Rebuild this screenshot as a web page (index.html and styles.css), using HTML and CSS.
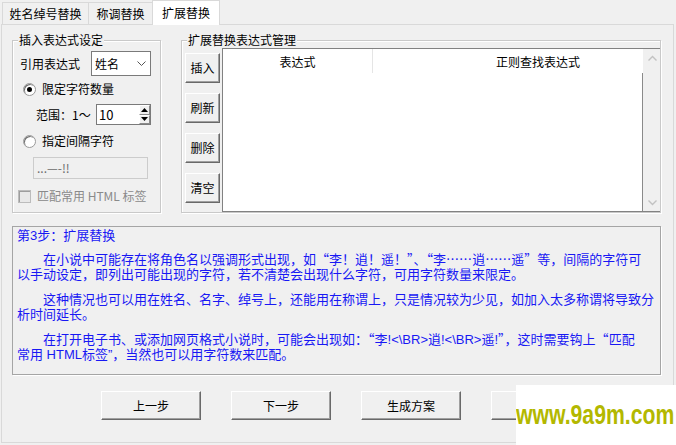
FILE: index.html
```html
<!DOCTYPE html>
<html lang="zh-CN">
<head>
<meta charset="utf-8">
<title>扩展替换</title>
<link rel="stylesheet" href="styles.css">
</head>
<body>
<div class="tabs">
  <div class="tab t1">姓名绰号替换</div>
  <div class="tab t2">称调替换</div>
  <div class="tab t3 active">扩展替换</div>
</div>
<div class="panel">
  <div class="top">
    <div class="group g1">
      <span class="gtitle">插入表达式设定</span>
      <div class="row r1">
        <span class="lbl">引用表达式</span>
        <div class="select"><span>姓名</span>
          <svg class="chev" width="9" height="6" viewBox="0 0 9 6"><path d="M0.5 0.5 L4.5 4.5 L8.5 0.5" fill="none" stroke="#555" stroke-width="1"/></svg>
        </div>
      </div>
      <div class="row r2"><span class="radio checked"></span><span class="rlbl">限定字符数量</span></div>
      <div class="row r3">
        <span class="rng">范围：1～</span>
        <div class="spin"><span class="spinval">10</span>
          <div class="spinbtns">
            <div class="sb"><svg width="7" height="4" viewBox="0 0 7 4"><path d="M0 4 L3.5 0 L7 4 Z" fill="#000"/></svg></div>
            <div class="sb"><svg width="7" height="4" viewBox="0 0 7 4"><path d="M0 0 L3.5 4 L7 0 Z" fill="#000"/></svg></div>
          </div>
        </div>
      </div>
      <div class="row r4"><span class="radio"></span><span class="rlbl">指定间隔字符</span></div>
      <div class="row r5"><div class="textbox">...—-!!</div></div>
      <div class="row r6"><span class="check"></span><span class="clbl">匹配常用 HTML 标签</span></div>
    </div>
    <div class="group g2">
      <span class="gtitle">扩展替换表达式管理</span>
      <div class="btncol">
        <div class="btn sbtn">插入</div>
        <div class="btn sbtn">刷新</div>
        <div class="btn sbtn">删除</div>
        <div class="btn sbtn">清空</div>
      </div>
      <div class="list">
        <div class="lmain">
          <div class="lhead">
            <div class="col c1">表达式</div>
            <div class="col c2">正则查找表达式</div>
          </div>
          <div class="lbody"></div>
        </div>
        <div class="vscroll">
          <div class="arr up"><svg width="9" height="6" viewBox="0 0 9 6"><path d="M0.5 5.5 L4.5 1.5 L8.5 5.5" fill="none" stroke="#c2c2c2" stroke-width="1.4"/></svg></div>
          <div class="arr down"><svg width="9" height="6" viewBox="0 0 9 6"><path d="M0.5 0.5 L4.5 4.5 L8.5 0.5" fill="none" stroke="#c2c2c2" stroke-width="1.4"/></svg></div>
        </div>
      </div>
    </div>
  </div>
  <div class="memo">
    <p class="p0">第3步：扩展替换</p>
    <p class="p1">　　在小说中可能存在将角色名以强调形式出现，如<span class="fw">“</span>李！逍！遥！<span class="fw">”</span>、<span class="fw">“</span>李<span class="fw">……</span>逍<span class="fw">……</span>遥<span class="fw">”</span>等，间隔的字符可<br>以手动设定，即列出可能出现的字符，若不清楚会出现什么字符，可用字符数量来限定。</p>
    <p class="p2">　　这种情况也可以用在姓名、名字、绰号上，还能用在称谓上，只是情况较为少见，如加入太多称谓将导致分<br>析时间延长。</p>
    <p class="p3">　　在打开电子书、或添加网页格式小说时，可能会出现如：<span class="fw">“</span>李!&lt;\BR&gt;逍!&lt;\BR&gt;遥!<span class="fw">”</span>，这时需要钩上<span class="fw">“</span>匹配<br>常用 HTML标签”，当然也可以用字符数来匹配。</p>
  </div>
  <div class="actions">
    <div class="btn abtn">上一步</div>
    <div class="btn abtn">下一步</div>
    <div class="btn abtn">生成方案</div>
    <div class="btn abtn"></div>
  </div>
</div>
<div class="watermark"><span>www.9a9m.com</span></div>
</body>
</html>
```
FILE: styles.css
```css
* { box-sizing: border-box; }
html, body { margin: 0; padding: 0; }
body {
  width: 676px;
  height: 445px;
  overflow: hidden;
  background: #f0f0f0;
  font-family: "Noto Sans CJK SC", "Microsoft YaHei", sans-serif;
  font-size: 12px;
  color: #000;
  position: relative;
}

/* tabs */
.tabs {
  display: flex;
  align-items: flex-start;
  height: 24px;
  padding-left: 2px;
}
.tab {
  height: 22px;
  margin-top: 2px;
  border: 1px solid #d9d9d9;
  border-bottom: none;
  background: #f0f0f0;
  display: flex;
  align-items: center;
  justify-content: center;
  line-height: 16px;
}
.t1 { width: 87px; }
.t2 { width: 65px; margin-left: -1px; }
.t3 { width: 68px; margin-left: -1px; }
.tab.active {
  height: 25px;
  margin-top: 0;
  background: #ffffff;
  position: relative;
  z-index: 1;
}

/* panel */
.panel {
  margin-left: 1px;
  width: 673px;
  height: 419px;
  border: 1px solid #d9d9d9;
  padding: 15px 0 0 10px;
}
.top {
  display: flex;
  align-items: flex-start;
}
.group {
  position: relative;
  border: 1px solid #c9c9c9;
  box-shadow: inset 1px 1px 0 #fff, 1px 1px 0 #fff;
  height: 173px;
}
.gtitle {
  position: absolute;
  top: -9px;
  left: 5px;
  background: #f0f0f0;
  padding: 0 1px;
  line-height: 16px;
  white-space: nowrap;
}
.g1 {
  width: 149px;
  display: flex;
  flex-direction: column;
}
.g2 {
  width: 480px;
  margin-left: 20px;
  display: flex;
  align-items: flex-start;
  padding-left: 3px;
}

/* group 1 rows */
.row {
  display: flex;
  align-items: center;
  white-space: nowrap;
  line-height: 16px;
}
.r1 { margin-top: 10px; height: 25px; padding-left: 7px; }
.lbl { width: 71px; }
.select {
  width: 60px;
  height: 25px;
  border: 1px solid #7a7a7a;
  background: #fff;
  display: flex;
  align-items: center;
  justify-content: space-between;
  padding: 0 3px 0 3px;
}
.chev { margin-right: 1px; }
.r2 { margin-top: 5px; height: 16px; padding-left: 10px; }
.radio {
  width: 13px;
  height: 13px;
  border-radius: 50%;
  border: 1px solid #9a9a9a;
  background: #fff;
  box-shadow: inset 1px 1px 0 #6f6f6f;
  display: inline-flex;
  align-items: center;
  justify-content: center;
  flex: none;
}
.radio.checked::after {
  content: "";
  width: 5px;
  height: 5px;
  border-radius: 50%;
  background: #000;
}
.rlbl { margin-left: 6px; }
.r3 { margin-top: 7px; height: 21px; padding-left: 23px; }
.rng { width: 60px; }
.spin {
  width: 55px;
  height: 21px;
  border: 1px solid #7a7a7a;
  background: #fff;
  display: flex;
  align-items: center;
  justify-content: space-between;
  padding-left: 2px;
}
.spinval { font-size: 13px; }
.spinbtns {
  width: 11px;
  height: 19px;
  display: flex;
  flex-direction: column;
}
.sb {
  flex: 1;
  display: flex;
  align-items: center;
  justify-content: center;
  background: #f0f0f0;
  border: 1px solid;
  border-color: #fff #8a8a8a #8a8a8a #fff;
}
.r4 { margin-top: 8px; height: 16px; padding-left: 10px; }
.r5 { margin-top: 8px; height: 22px; padding-left: 20px; }
.textbox {
  width: 115px;
  height: 22px;
  border: 1px solid #cccccc;
  background: #f0f0f0;
  color: #6d6d6d;
  padding-left: 3px;
  display: flex;
  align-items: center;
}
.r6 { margin-top: 9px; height: 16px; padding-left: 5px; }
.check {
  width: 13px;
  height: 13px;
  border: 1px solid #bcbcbc;
  background: #e8e8e8;
  box-shadow: inset 1px 1px 0 #9d9d9d;
  flex: none;
}
.clbl { margin-left: 6px; color: #8a8a8a; }

/* group 2 */
.btncol {
  display: flex;
  flex-direction: column;
  gap: 10px;
  margin-top: 12px;
}
.btn {
  background: #f0f0f0;
  border: 1px solid;
  border-color: #ffffff #696969 #696969 #ffffff;
  box-shadow: inset -1px -1px 0 #a0a0a0;
  display: flex;
  align-items: center;
  justify-content: center;
  line-height: 16px;
  white-space: nowrap;
}
.sbtn { width: 35px; height: 30px; }
.list {
  margin-top: 7px;
  margin-left: 2px;
  width: 438px;
  height: 164px;
  border-left: 1px solid #828282;
  border-top: 1px solid #828282;
  border-bottom: 1px solid #828282;
  display: flex;
  position: relative;
  z-index: 1;
}
.lmain {
  width: 420px;
  display: flex;
  flex-direction: column;
}
.lhead {
  height: 24px;
  background: #fff;
  display: flex;
  overflow: hidden;
}
.col {
  flex: none;
  display: flex;
  align-items: center;
  justify-content: center;
  white-space: nowrap;
  padding-top: 1px;
}
.c1 { width: 150px; border-right: 1px solid #e5e5e5; }
.c2 { width: 330px; }
.lbody {
  flex: 1;
  background: #fff;
  border-right: 1px solid #8a8a8a;
}
.vscroll {
  width: 17px;
  background: #f0f0f0;
  display: flex;
  flex-direction: column;
  justify-content: space-between;
  padding: 6px 0 5px 1px;
}
.arr { display: flex; justify-content: center; height: 6px; }

/* memo */
.memo {
  margin-top: 13px;
  width: 649px;
  height: 149px;
  border: 1px solid #a5a5a5;
  box-shadow: 1px 1px 0 #fff;
  padding: 1px 0 0 4px;
  color: #1818f4;
  font-family: "Liberation Sans", "Noto Sans CJK SC", sans-serif;
  font-size: 13px;
  white-space: nowrap;
  overflow: hidden;
}
.memo p { margin: 0; line-height: 15px; }
.memo .p1 { margin-top: 9px; }
.memo .p2 { margin-top: 10px; }
.memo .p3 { margin-top: 10px; }
.memo .fw {
  font-family: "Noto Sans CJK SC", sans-serif;
  font-size: 13px;
  line-height: 1;
  vertical-align: baseline;
}

/* action buttons */
.actions {
  display: flex;
  gap: 30px;
  margin-top: 16px;
  padding-left: 89px;
}
.abtn { width: 100px; height: 29px; }

/* watermark overlay */
.watermark {
  position: absolute;
  left: 516px;
  top: 385px;
  width: 160px;
  height: 60px;
  background: #fff;
  padding-top: 17px;
  overflow: hidden;
  z-index: 5;
}
.watermark span {
  display: inline-block;
  font-family: "Liberation Sans", Arial, sans-serif;
  font-weight: bold;
  font-size: 27px;
  line-height: 27px;
  color: #b3b800;
  transform: scaleX(0.785);
  transform-origin: left center;
  white-space: nowrap;
}
```
